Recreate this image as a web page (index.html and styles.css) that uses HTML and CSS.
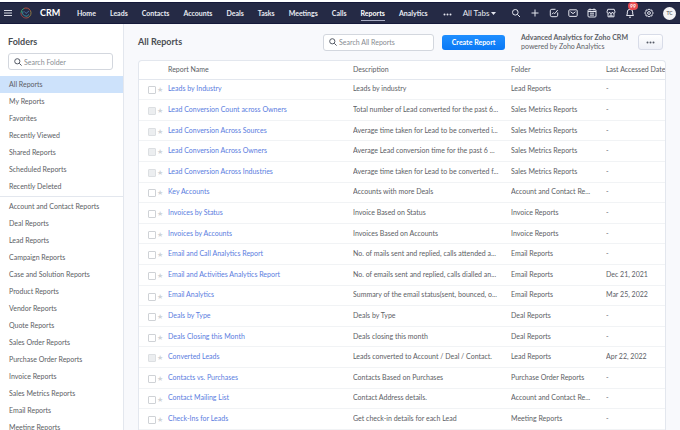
FILE: index.html
```html
<!DOCTYPE html>
<html lang="en">
<head>
    <meta charset="UTF-8">
    <meta name="viewport" content="width=device-width, initial-scale=1.0">
    <title>All Reports - CRM</title>
    <link rel="stylesheet" href="styles.css">
</head>
<body>

<header class="topbar">
    <button class="icon-btn menu-btn" aria-label="Menu">
        <svg width="8" height="8" viewBox="0 0 8 8"><path d="M0 1.5h8M0 4h8M0 6.5h8" stroke="#d5d7e2" stroke-width="1.1"/></svg>
    </button>
    <svg class="logo" width="12" height="12" viewBox="0 0 12 12" fill="none" stroke-width="1">
        <path d="M1 6a5 5 0 0 1 3-4.6" stroke="#3f9a6c"/>
        <path d="M4 1.4a5 5 0 0 1 6.5 2.4" stroke="#b0503f"/>
        <path d="M10.5 3.8a5 5 0 0 1-2.3 6.7" stroke="#8f7a45"/>
        <path d="M8.2 10.5A5 5 0 0 1 1 6" stroke="#a04a44"/>
        <path d="M3 4.2a3.300 3.300 0 0 0 6 3.200" stroke="#3a8f9a"/>
        <path d="M4.500 4.500L6 6.500l3-2.500" stroke="#4f7fae" stroke-width="0.8"/>
    </svg>
    <span class="brand">CRM</span>

    <nav class="tabs">
        <a href="#">Home</a>
        <a href="#">Leads</a>
        <a href="#">Contacts</a>
        <a href="#">Accounts</a>
        <a href="#">Deals</a>
        <a href="#">Tasks</a>
        <a href="#">Meetings</a>
        <a href="#">Calls</a>
        <a href="#" class="active">Reports</a>
        <a href="#">Analytics</a>
    </nav>
    <button class="icon-btn more-btn" aria-label="More tabs">
        <svg width="9" height="3" viewBox="0 0 9 3" fill="#e3e5ee"><circle cx="1.5" cy="1.5" r="1"/><circle cx="4.5" cy="1.5" r="1"/><circle cx="7.5" cy="1.5" r="1"/></svg>
    </button>
    <button class="all-tabs">All Tabs
        <svg width="5" height="3" viewBox="0 0 5 3"><path d="M0 0h5L2.500 3z" fill="#e3e5ee"/></svg>
    </button>

    <div class="tools">
        <button class="icon-btn" aria-label="Search">
            <svg width="10" height="10" viewBox="0 0 10 10"><circle cx="4.300" cy="4.300" r="2.800"/><path d="M6.400 6.400L9 9"/></svg>
        </button>
        <button class="icon-btn" aria-label="Create">
            <svg width="10" height="10" viewBox="0 0 10 10"><path d="M5 1.500v7M1.500 5h7"/></svg>
        </button>
        <button class="icon-btn" aria-label="Feeds">
            <svg width="10" height="10" viewBox="0 0 10 10"><path d="M6.500 1.300H2.800a1.500 1.500 0 0 0-1.500 1.500v4.400a1.500 1.500 0 0 0 1.500 1.500h4.400a1.500 1.500 0 0 0 1.500-1.500V4.500M3 6.200l1.500-1.500 1.200 1 3-3.700"/></svg>
        </button>
        <button class="icon-btn" aria-label="Mail">
            <svg width="10" height="10" viewBox="0 0 10 10"><rect x="0.800" y="1.800" width="8.400" height="6.600" rx="1"/><path d="M2.500 3.700L5 5.600l2.500-1.900"/></svg>
        </button>
        <button class="icon-btn" aria-label="Calendar">
            <svg width="10" height="10" viewBox="0 0 10 10"><rect x="1" y="1.600" width="8" height="7.400" rx="1"/><path d="M1 3.500h8M3 .5v2M7 .5v2M3 5.200h4M3 7.100h4" /></svg>
        </button>
        <button class="icon-btn" aria-label="Marketplace">
            <svg width="10" height="10" viewBox="0 0 10 10"><path d="M1.800 1.300h6.400l.8 2.500a1.300 1.300 0 0 1-2.600.3 1.400 1.400 0 0 1-2.800 0A1.300 1.300 0 0 1 1 3.800zM2 5.300v3.500h6V5.300M4 8.800V7h2v1.800"/></svg>
        </button>
        <button class="icon-btn bell" aria-label="Notifications">
            <svg width="10" height="10" viewBox="0 0 10 10"><path d="M1.500 7.500h7L7.700 6V4a2.700 2.700 0 0 0-5.400 0v2zM4 9.200h2"/></svg>
            <span class="badge">99</span>
        </button>
        <button class="icon-btn" aria-label="Settings">
            <svg width="10" height="10" viewBox="0 0 10 10"><path d="M5 .9l1.200 1.200 1.700-.1.300 1.700L9.300 5 8.200 6.300l-.3 1.700-1.700-.1L5 9.100 3.800 7.900l-1.700.1-.3-1.700L.7 5l1.100-1.300L2.100 2l1.700.1z"/><circle cx="5" cy="5" r="1.400"/></svg>
        </button>
        <button class="avatar">TC</button>
    </div>
</header>

<div class="layout">
    <!-- Folder list -->
    <aside class="sidebar">
        <h2>Folders</h2>
        <label class="search folder-search">
            <svg width="8" height="8" viewBox="0 0 8 8"><circle cx="3.300" cy="3.300" r="2.600"/><path d="M5.300 5.300l2.300 2.300"/></svg>
            <input type="text" placeholder="Search Folder" aria-label="Search Folder">
        </label>
        <ul class="folders">
            <li class="selected"><a href="#">All Reports</a></li>
            <li><a href="#">My Reports</a></li>
            <li><a href="#">Favorites</a></li>
            <li><a href="#">Recently Viewed</a></li>
            <li><a href="#">Shared Reports</a></li>
            <li><a href="#">Scheduled Reports</a></li>
            <li><a href="#">Recently Deleted</a></li>
        </ul>
        <ul class="folders modules">
            <li><a href="#">Account and Contact Reports</a></li>
            <li><a href="#">Deal Reports</a></li>
            <li><a href="#">Lead Reports</a></li>
            <li><a href="#">Campaign Reports</a></li>
            <li><a href="#">Case and Solution Reports</a></li>
            <li><a href="#">Product Reports</a></li>
            <li><a href="#">Vendor Reports</a></li>
            <li><a href="#">Quote Reports</a></li>
            <li><a href="#">Sales Order Reports</a></li>
            <li><a href="#">Purchase Order Reports</a></li>
            <li><a href="#">Invoice Reports</a></li>
            <li><a href="#">Sales Metrics Reports</a></li>
            <li><a href="#">Email Reports</a></li>
            <li><a href="#">Meeting Reports</a></li>
        </ul>
    </aside>

    <!-- Reports -->
    <main class="content">
        <div class="toolbar">
            <h1>All Reports</h1>
            <label class="search report-search">
                <svg width="8" height="8" viewBox="0 0 8 8"><circle cx="3.300" cy="3.300" r="2.600"/><path d="M5.300 5.300l2.300 2.300"/></svg>
                <input type="text" placeholder="Search All Reports" aria-label="Search All Reports">
            </label>
            <button class="create-btn">Create Report</button>
            <p class="promo"><strong>Advanced Analytics for Zoho CRM</strong><br>powered by Zoho Analytics</p>
            <button class="options-btn" aria-label="More options">
                <svg width="9" height="3" viewBox="0 0 9 3" fill="#555a66"><circle cx="1.500" cy="1.500" r="1"/><circle cx="4.500" cy="1.500" r="1"/><circle cx="7.500" cy="1.500" r="1"/></svg>
            </button>
        </div>

        <div class="card">
            <table>
                <colgroup>
                    <col class="col-check">
                    <col>
                    <col class="col-desc">
                    <col class="col-folder">
                    <col class="col-date">
                </colgroup>
                <thead>
                    <tr><th></th><th>Report Name</th><th>Description</th><th>Folder</th><th class="date">Last Accessed Date</th></tr>
                </thead>
                <tbody>
                    <tr>
                        <td class="pick"><input type="checkbox" aria-label="Leads by Industry"><button class="star" aria-label="Favorite">★</button></td>
                        <td><a href="#">Leads by Industry</a></td><td>Leads by industry</td><td>Lead Reports</td><td>-</td>
                    </tr>
                    <tr>
                        <td class="pick"><input type="checkbox" aria-label="Lead Conversion Count across Owners" disabled><button class="star" aria-label="Favorite">★</button></td>
                        <td><a href="#">Lead Conversion Count across Owners</a></td><td>Total number of Lead converted for the past 6...</td><td>Sales Metrics Reports</td><td>-</td>
                    </tr>
                    <tr>
                        <td class="pick"><input type="checkbox" aria-label="Lead Conversion Across Sources" disabled><button class="star" aria-label="Favorite">★</button></td>
                        <td><a href="#">Lead Conversion Across Sources</a></td><td>Average time taken for Lead to be converted i...</td><td>Sales Metrics Reports</td><td>-</td>
                    </tr>
                    <tr>
                        <td class="pick"><input type="checkbox" aria-label="Lead Conversion Across Owners" disabled><button class="star" aria-label="Favorite">★</button></td>
                        <td><a href="#">Lead Conversion Across Owners</a></td><td>Average Lead conversion time for the past 6 ...</td><td>Sales Metrics Reports</td><td>-</td>
                    </tr>
                    <tr>
                        <td class="pick"><input type="checkbox" aria-label="Lead Conversion Across Industries" disabled><button class="star" aria-label="Favorite">★</button></td>
                        <td><a href="#">Lead Conversion Across Industries</a></td><td>Average time taken for Lead to be converted f...</td><td>Sales Metrics Reports</td><td>-</td>
                    </tr>
                    <tr>
                        <td class="pick"><input type="checkbox" aria-label="Key Accounts"><button class="star" aria-label="Favorite">★</button></td>
                        <td><a href="#">Key Accounts</a></td><td>Accounts with more Deals</td><td>Account and Contact Re...</td><td>-</td>
                    </tr>
                    <tr>
                        <td class="pick"><input type="checkbox" aria-label="Invoices by Status"><button class="star" aria-label="Favorite">★</button></td>
                        <td><a href="#">Invoices by Status</a></td><td>Invoice Based on Status</td><td>Invoice Reports</td><td>-</td>
                    </tr>
                    <tr>
                        <td class="pick"><input type="checkbox" aria-label="Invoices by Accounts"><button class="star" aria-label="Favorite">★</button></td>
                        <td><a href="#">Invoices by Accounts</a></td><td>Invoices Based on Accounts</td><td>Invoice Reports</td><td>-</td>
                    </tr>
                    <tr>
                        <td class="pick"><input type="checkbox" aria-label="Email and Call Analytics Report"><button class="star" aria-label="Favorite">★</button></td>
                        <td><a href="#">Email and Call Analytics Report</a></td><td>No. of mails sent and replied, calls attended a...</td><td>Email Reports</td><td>-</td>
                    </tr>
                    <tr>
                        <td class="pick"><input type="checkbox" aria-label="Email and Activities Analytics Report"><button class="star" aria-label="Favorite">★</button></td>
                        <td><a href="#">Email and Activities Analytics Report</a></td><td>No. of emails sent and replied, calls dialled an...</td><td>Email Reports</td><td>Dec 21, 2021</td>
                    </tr>
                    <tr>
                        <td class="pick"><input type="checkbox" aria-label="Email Analytics"><button class="star" aria-label="Favorite">★</button></td>
                        <td><a href="#">Email Analytics</a></td><td>Summary of the email status(sent, bounced, o...</td><td>Email Reports</td><td>Mar 25, 2022</td>
                    </tr>
                    <tr>
                        <td class="pick"><input type="checkbox" aria-label="Deals by Type"><button class="star" aria-label="Favorite">★</button></td>
                        <td><a href="#">Deals by Type</a></td><td>Deals by Type</td><td>Deal Reports</td><td>-</td>
                    </tr>
                    <tr>
                        <td class="pick"><input type="checkbox" aria-label="Deals Closing this Month"><button class="star" aria-label="Favorite">★</button></td>
                        <td><a href="#">Deals Closing this Month</a></td><td>Deals closing this month</td><td>Deal Reports</td><td>-</td>
                    </tr>
                    <tr>
                        <td class="pick"><input type="checkbox" aria-label="Converted Leads" disabled><button class="star" aria-label="Favorite">★</button></td>
                        <td><a href="#">Converted Leads</a></td><td>Leads converted to Account / Deal / Contact.</td><td>Lead Reports</td><td>Apr 22, 2022</td>
                    </tr>
                    <tr>
                        <td class="pick"><input type="checkbox" aria-label="Contacts vs. Purchases"><button class="star" aria-label="Favorite">★</button></td>
                        <td><a href="#">Contacts vs. Purchases</a></td><td>Contacts Based on Purchases</td><td>Purchase Order Reports</td><td>-</td>
                    </tr>
                    <tr>
                        <td class="pick"><input type="checkbox" aria-label="Contact Mailing List"><button class="star" aria-label="Favorite">★</button></td>
                        <td><a href="#">Contact Mailing List</a></td><td>Contact Address details.</td><td>Account and Contact Re...</td><td>-</td>
                    </tr>
                    <tr>
                        <td class="pick"><input type="checkbox" aria-label="Check-Ins for Leads"><button class="star" aria-label="Favorite">★</button></td>
                        <td><a href="#">Check-Ins for Leads</a></td><td>Get check-in details for each Lead</td><td>Meeting Reports</td><td>-</td>
                    </tr>
                </tbody>
            </table>
        </div>
    </main>
</div>

</body>
</html>
```
FILE: styles.css
```css
* {
    box-sizing: border-box;
}

body {
    margin: 0;
    height: 100vh;
    display: flex;
    flex-direction: column;
    overflow: hidden;
    font-family: Lato, sans-serif;
    font-size: 7px;
    line-height: 10px;
    color: #5c6065;
    background: #fff;
}

h1, h2, p, ul {
    margin: 0;
    padding: 0;
}

h1, h2 {
    font-size: 9px;
    line-height: 12px;
    color: #4a4d52;
}

a {
    color: inherit;
    text-decoration: none;
}

button, input {
    margin: 0;
    padding: 0;
    font: inherit;
    color: inherit;
}

button {
    border: none;
    background: none;
    cursor: pointer;
}

/* Top bar */
.topbar {
    display: flex;
    align-items: center;
    flex: none;
    height: 22px;
    margin-top: 2px;
    padding: 0 4px;
    background: #252a45;
    border-top: 1px solid #15193a;
    border-bottom: 1px solid #15193a;
    color: #e8eaf2;
    font-weight: bold;
}

.icon-btn {
    display: flex;
    align-items: center;
    justify-content: center;
}

.logo {
    flex: none;
    margin: 0 8px;
}

.brand {
    flex: none;
    width: 37px;
    font-size: 9px;
    color: #fff;
}

.tabs {
    display: flex;
    gap: 14px;
}

.tabs a {
    padding: 2px 0;
    border-bottom: 1px solid transparent;
}

.tabs .active {
    color: #fff;
    border-bottom-color: #a9adc4;
}

.more-btn {
    margin: 2px 11px 0 15px;
}

.all-tabs {
    display: flex;
    align-items: center;
    gap: 2px;
    font-size: 8px;
    font-weight: normal;
    white-space: nowrap;
}

.tools {
    display: flex;
    align-items: center;
    gap: 9px;
    margin-left: auto;
}

.tools svg {
    fill: none;
    stroke: #e3e5ee;
    stroke-width: 1;
}

.bell {
    position: relative;
}

.badge {
    position: absolute;
    top: -6px;
    left: 3px;
    width: 10px;
    height: 8px;
    border-radius: 4px;
    background: #e84a50;
    color: #fff;
    font-size: 5px;
    line-height: 8px;
}

.avatar {
    width: 13px;
    height: 13px;
    border-radius: 50%;
    background: #f3f3f5;
    color: #777;
    font-size: 5px;
}

/* Page */
.layout {
    display: flex;
    flex: 1;
    min-height: 0;
}

.sidebar {
    flex: none;
    width: 124px;
    padding-top: 12px;
    border-right: 1px solid #e3e7ee;
    overflow: hidden;
}

.sidebar h2 {
    padding-left: 8px;
}

.search {
    display: flex;
    align-items: center;
    gap: 2px;
    height: 17px;
    padding: 0 5px;
    border: 1px solid #d3d7de;
    border-radius: 3px;
    background: #fff;
}

.search svg {
    flex: none;
    fill: none;
    stroke: #555a66;
    stroke-width: 1;
}

.search input {
    width: 100%;
    min-width: 0;
    border: none;
    outline: none;
    background: none;
}

.search input::placeholder {
    color: #888c92;
}

.folder-search {
    margin: 5px 10px 6px 8px;
}

.folders {
    list-style: none;
}

.folders a {
    display: block;
    padding-left: 9px;
    line-height: 17px;
}

.folders .selected {
    background: #cde2fb;
}

.modules {
    margin-top: 1px;
    padding-top: 1px;
    border-top: 1px solid #e3e7ee;
}

.content {
    display: flex;
    flex-direction: column;
    flex: 1;
    min-width: 0;
    padding: 9px 14px 0;
    background: #f8f9fc;
}

.toolbar {
    display: flex;
    align-items: center;
    height: 18px;
    margin-bottom: 9px;
}

.report-search {
    width: 111px;
    margin-left: auto;
}

.create-btn {
    width: 63px;
    height: 15px;
    margin: 0 16px 0 8px;
    border-radius: 3px;
    background: linear-gradient(#1f8fff, #0a78f5);
    color: #fff;
    font-weight: bold;
}

.promo {
    line-height: 9px;
    white-space: nowrap;
}

.options-btn {
    display: flex;
    align-items: center;
    justify-content: center;
    width: 25px;
    height: 16px;
    margin: 0 3px 0 10px;
    border: 1px solid #d8dce8;
    border-radius: 3px;
    background: linear-gradient(#fff, #eef0f7);
}

/* Reports table */
.card {
    flex: 1;
    min-height: 0;
    border: 1px solid #e3e7ee;
    border-bottom: none;
    border-radius: 4px 4px 0 0;
    background: #fff;
    overflow: hidden;
}

/* Rows share the height left under the toolbar */
table {
    width: 100%;
    height: 100%;
    table-layout: fixed;
    border-collapse: collapse;
}

.col-check {
    width: 29px;
}

.col-desc {
    width: 158px;
}

.col-folder {
    width: 95px;
}

.col-date {
    width: 59px;
}

th, td {
    padding: 0 5px 2px 0;
    border-bottom: 1px solid #f1f3f5;
    text-align: left;
    font-weight: normal;
    white-space: nowrap;
    overflow: hidden;
    text-overflow: ellipsis;
}

th {
    height: 18px;
    border-bottom-color: #e3e7ee;
}

.date {
    padding-right: 0;
    text-overflow: clip;
}

td:last-child {
    padding-right: 0;
}

td a {
    color: #5a7de0;
}

.pick {
    padding: 1px 0 0 9px;
    line-height: 8px;
}

.pick input {
    appearance: none;
    width: 8px;
    height: 8px;
    border: 1px solid #cfd2d6;
    border-radius: 1px;
    background: #fff;
    vertical-align: middle;
}

.pick input:disabled {
    background: #eceef0;
    border-color: #dcdfe2;
}

.star {
    margin-left: 1px;
    color: #cfd2d6;
    font-family: "DejaVu Sans", sans-serif;
    font-size: 7px;
    line-height: 8px;
    vertical-align: middle;
}
```
